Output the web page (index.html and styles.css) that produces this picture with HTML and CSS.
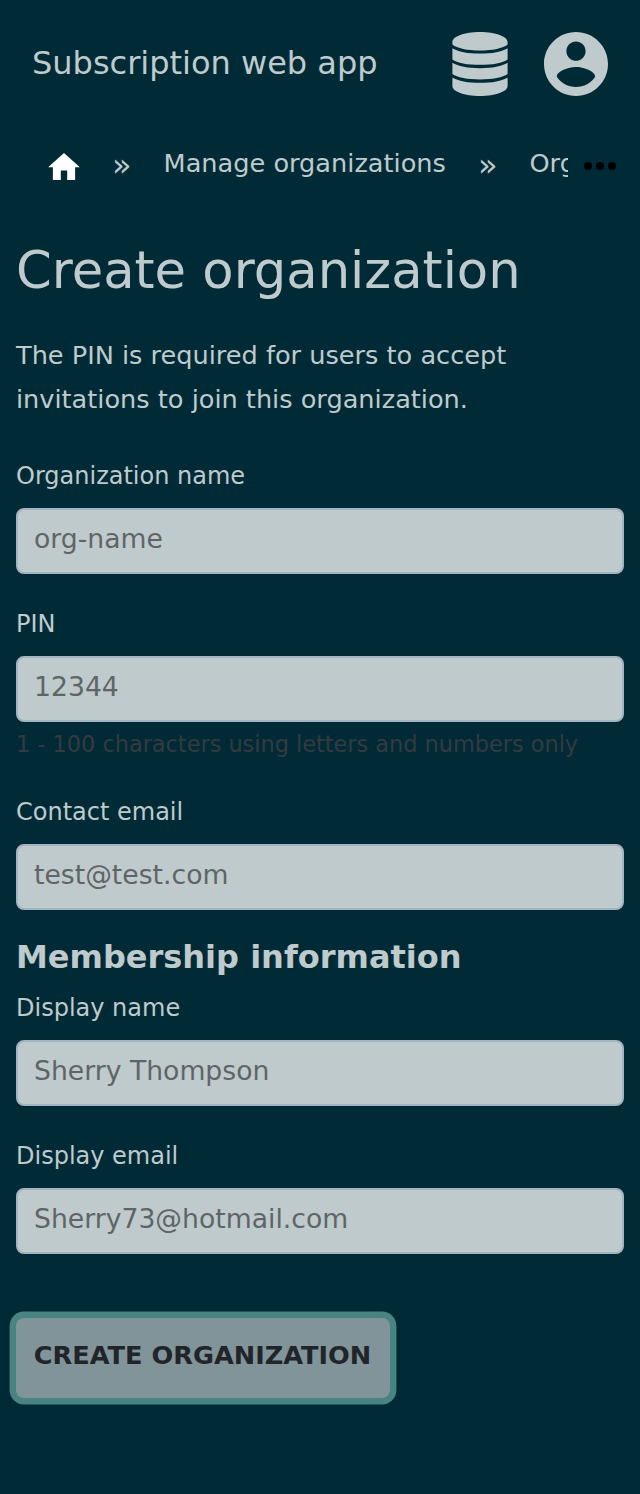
FILE: index.html
```
<!DOCTYPE html>
<html lang="en">
<head>
<meta charset="utf-8">
<title>Subscription web app</title>
<link rel="stylesheet" href="styles.css">
</head>
<body>
<header class="topbar">
  <a class="brand">Subscription web app</a>
  <div class="actions">
    <svg class="icon-db" viewBox="0 0 56 64"><path d="M.4 10C.4 4.500 12.500 0 28 0S55.600 4.500 55.600 10v2.400C51 16.300 40.500 18.400 28 18.400S5 16.300.4 12.400zM.4 16.200C6 19.800 16 21.600 28 21.600s22-1.800 27.600-5.400v11.200C51 31 40.500 32.800 28 32.800S5 31 .4 27.400zM.4 30.800C6 34.400 16 36.200 28 36.200s22-1.800 27.600-5.400v11.200C51 45.600 40.500 47.400 28 47.400S5 45.600.4 42zM.4 45.400C6 49 16 50.800 28 50.800s22-1.800 27.600-5.400V54C55.600 59.500 43.500 64 28 64S.4 59.500.4 54z"/></svg>
    <svg class="icon-user" viewBox="2 2 20 20"><path d="M12 2C6.48 2 2 6.48 2 12s4.480 10 10 10 10-4.480 10-10S17.520 2 12 2zm0 3c1.660 0 3 1.340 3 3s-1.340 3-3 3-3-1.340-3-3 1.340-3 3-3zm0 14.200c-2.500 0-4.710-1.280-6-3.220.03-1.990 4-3.080 6-3.080 1.990 0 5.970 1.090 6 3.080-1.290 1.940-3.500 3.220-6 3.220z"/></svg>
  </div>
</header>
<nav class="crumbs">
  <svg class="icon-home" viewBox="2 3 20 17"><path d="M10 20v-6h4v6h5v-8h3L12 3 2 12h3v8z"/></svg>
  <span class="sep">»</span>
  <a class="crumb">Manage organizations</a>
  <span class="sep">»</span>
  <a class="crumb last">Organization</a>
  <svg class="icon-more" viewBox="0 0 32 8"><circle cx="4" cy="4" r="4"/><circle cx="16" cy="4" r="4"/><circle cx="28" cy="4" r="4"/></svg>
</nav>
<main class="content">
  <h1 class="title">Create organization</h1>
  <p class="intro">The PIN is required for users to accept invitations to join this organization.</p>
  <form class="form">
    <div class="field"><label class="label" for="org">Organization name</label><input class="input" id="org" placeholder="org-name"></div>
    <div class="field"><label class="label" for="pin">PIN</label><input class="input" id="pin" placeholder="12344"><small class="hint">1 - 100 characters using letters and numbers only</small></div>
    <div class="field"><label class="label" for="mail">Contact email</label><input class="input" id="mail" placeholder="test@test.com"></div>
    <h2 class="subtitle">Membership information</h2>
    <div class="field"><label class="label" for="dn">Display name</label><input class="input" id="dn" placeholder="Sherry Thompson"></div>
    <div class="field"><label class="label" for="de">Display email</label><input class="input" id="de" placeholder="Sherry73@hotmail.com"></div>
    <button class="submit" type="button">CREATE ORGANIZATION</button>
  </form>
</main>
</body>
</html>
```
FILE: styles.css
```
* { box-sizing: border-box; }
body { margin: 0; min-height: 1494px; background: #002b36; color: #bfcacc; font-family: "DejaVu Sans", sans-serif; }
.topbar { display: flex; justify-content: space-between; align-items: center; height: 128px; padding: 0 32px; }
.brand { font-size: 32px; line-height: 48px; margin-top: -2px; }
.actions { display: flex; gap: 36px; fill: #bfcacc; }
.icon-db { width: 56px; height: 64px; }
.icon-user { width: 64px; height: 64px; }
.crumbs { display: flex; height: 72px; padding: 0 24px 0 48px; font-size: 25.6px; line-height: 70px; white-space: nowrap; }
.icon-home { flex: none; width: 32px; height: 27px; margin-top: 25px; fill: #fff; }
.sep { flex: none; width: 83.6px; text-align: center; font-size: 32px; line-height: 74px; }
.crumb { flex: none; }
.last { width: 39px; overflow: hidden; }
.icon-more { flex: none; width: 32px; height: 8px; margin: 34px 0 0 auto; }
.content { padding: 32px 16px 0; }
.title { margin: 0; font-size: 51.2px; line-height: 76px; font-weight: 400; }
.intro { margin: 25px 0 0; font-size: 25.6px; line-height: 44px; }
.form { display: flex; flex-direction: column; margin-top: 37px; }
.field { display: flex; flex-direction: column; margin-bottom: 32px; }
.label { font-size: 24px; line-height: 36px; margin-bottom: 14px; }
.input { height: 66px; border: 2px solid #a3b3c1; border-radius: 8px; padding: 0 16px 6px; background: #bfcacc; font: 26.67px "DejaVu Sans", sans-serif; }
.input::placeholder { color: #5f6566; opacity: 1; }
.hint { font-size: 22.4px; line-height: 34px; margin: 5px 0 1px; color: #343a40; }
.subtitle { margin: -9px 0 9px; font-size: 32px; line-height: 48px; }
.submit { align-self: flex-start; width: 374px; height: 80px; margin-top: 32px; padding: 0 1px 6px 0; border: 0; border-radius: 8px; background: #80949a; box-shadow: 0 0 0 6.400px #488482; color: #212529; font: bold 25.6px "DejaVu Sans", sans-serif; }
```
